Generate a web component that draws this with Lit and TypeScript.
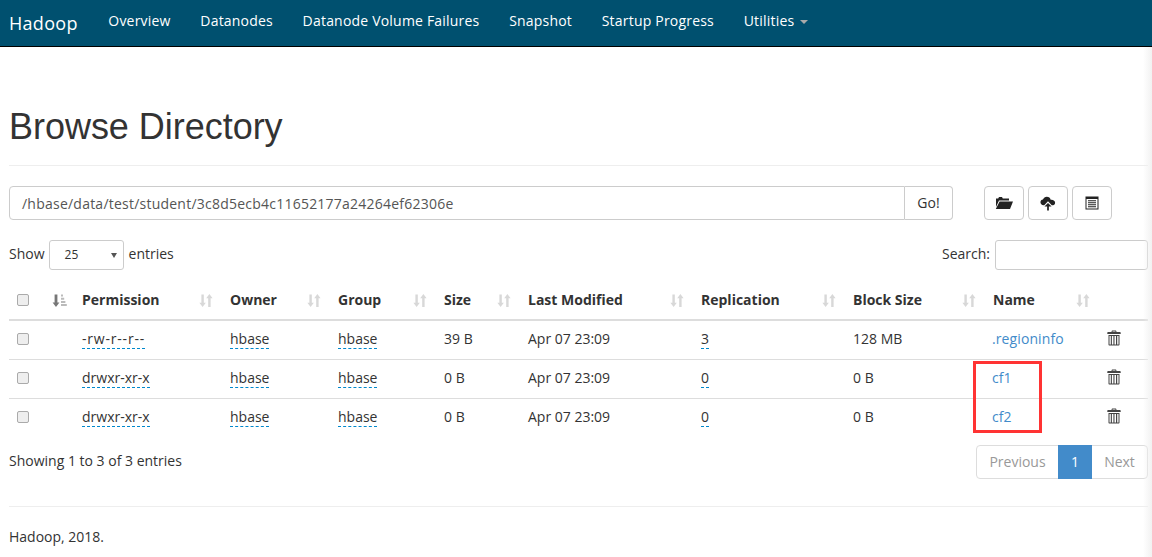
import { LitElement, html, css, svg } from "lit";
import { customElement } from "lit/decorators.js";
import { classMap } from "lit/directives/class-map.js";

const sortIcon = (active = false) => html`<svg class="sort" viewBox="0 0 16 14" width="16" height="15">
  ${active
    ? svg`<path d="M2.600 1h2.800v8h2L4 13.500.600 9h2z" fill="#777"/><path d="M9 1h2v2H9zM9 4.200h3.200v2H9zM9 7.400h4.400v2H9zM9 10.600h5.800v2H9z" fill="#bbb"/>`
    : svg`<path d="M3.400 1h2.400v8.200h2L4.600 13.500 1.400 9.200h2zM10.200 13.500h2.400V4.800h2L11.400.500 8.200 4.800h2z" fill="#d8d8d8"/>`}
</svg>`;

const trash = html`<svg class="ico" viewBox="0 0 14 16" width="14" height="16"><path fill="#444" fill-rule="evenodd" d="M5 .5h4l.6 1.500H13c.4 0 .7.300.7.700V4H.3V2.700c0-.4.300-.7.700-.7h3.400zM5.700 1.400 5.400 2h3.200l-.3-.6zM1.500 5h11v9.500c0 .6-.4 1-1 1h-9c-.6 0-1-.4-1-1zm1 1v8.500h1.300V6zm2.400 0v8.500h1.500V6zm2.600 0v8.500H9V6zm2.700 0v8.500h1.300V6z"/></svg>`;

const rows = [
  { p: "-rw-r--r--", s: "39 B", r: "3", b: "128 MB", n: ".regioninfo" },
  { p: "drwxr-xr-x", s: "0 B", r: "0", b: "0 B", n: "cf1" },
  { p: "drwxr-xr-x", s: "0 B", r: "0", b: "0 B", n: "cf2" },
];
const cols = ["Permission", "Owner", "Group", "Size", "Last Modified", "Replication", "Block Size", "Name"];
const navs = ["Overview", "Datanodes", "Datanode Volume Failures", "Snapshot", "Startup Progress"];

@customElement("app-root")
export class AppRoot extends LitElement {
  static styles = css`
    :host { display: block; position: relative; height: 557px; overflow: hidden; background: #fff; color: #333; font: 14px/20px "Open Sans", sans-serif; }
    nav { display: flex; align-items: center; box-sizing: content-box; background: #00506f; border-bottom: 1px solid #000; color: #fff; padding: 0 0 4px 9px; height: 42px; }
    .brand { font-size: 18px; width: 99.300px; letter-spacing: .3px; margin-top: 3px; }
    .nav-item { margin-right: 29.700px; letter-spacing: .2px; }
    .caret { display: inline-block; margin-left: 2px; vertical-align: middle; border-top: 4px solid #aaa; border-left: 4px solid transparent; border-right: 4px solid transparent; }
    main { padding: 0 4px 0 9px; }
    h1 { font: 500 36px/40px "Liberation Sans", sans-serif; letter-spacing: -.03px; margin: 0; padding: 60px 0 18px; border-bottom: 1px solid #eee; }
    .toolbar { display: flex; margin-top: 20px; height: 34px; }
    .path { width: 896px; box-sizing: border-box; border: 1px solid #ccc; border-radius: 4px 0 0 4px; padding: 7px 12px 5px; color: #555; letter-spacing: .23px; }
    .btn { box-sizing: border-box; border: 1px solid #ccc; border-radius: 4px; display: flex; align-items: center; justify-content: center; height: 34px; }
    .go { width: 48px; border-left: 0; border-radius: 0 4px 4px 0; }
    .tools { display: flex; gap: 4px; margin-left: 31px; }
    .tools .btn { width: 40px; }
    .filters { display: flex; align-items: center; margin-top: 20px; height: 30px; }
    .lbl { padding-bottom: 2px; }
    .sel { box-sizing: border-box; width: 75px; height: 30px; margin: 0 5px 0 4px; border: 1px solid #ccc; border-radius: 3px; display: flex; align-items: center; justify-content: space-between; padding: 0 6px 0 15px; font-size: 12px; }
    .sel i { border-top: 5px solid #555; border-left: 3px solid transparent; border-right: 3px solid transparent; }
    .grow { flex: 1; }
    .search { box-sizing: border-box; width: 153px; height: 30px; margin-left: 5px; border: 1px solid #ccc; border-radius: 3px; }
    table { border-collapse: collapse; table-layout: fixed; width: 1139px; margin-top: 11px; }
    th, td { padding: 0 8px; text-align: left; border-top: 1px solid #ddd; }
    td { padding-bottom: 2px; box-sizing: border-box; height: 39px; }
    th { border-top: 0; border-bottom: 2px solid #ddd; height: 39px; box-sizing: border-box; font-weight: 700; }
    .cell { display: flex; justify-content: space-between; align-items: center; }
    .sort { display: block; flex: none; }
    .cb { display: block; box-sizing: border-box; width: 12px; height: 12px; border: 1px solid #aaa; border-radius: 2px; background: #eee; }
    .ed { border-bottom: 1px dashed #08c; text-decoration: none; color: #333; }
    .wide { letter-spacing: .8px; }
    a.name { color: #428bca; letter-spacing: .1px; margin-left: -1px; }
    .ico { display: block; margin-top: -1px; }
    .foot { display: flex; align-items: center; justify-content: space-between; margin-top: 8px; }
    .pager { display: flex; height: 34px; border: 1px solid #ddd; border-radius: 4px; box-sizing: border-box; width: 172px; color: #999; }
    .pager span { display: flex; align-items: center; justify-content: center; }
    .pager .cur { background: #428bca; color: #fff; width: 34px; margin: -1px 0; }
    .pv { width: 81px; } .nx { flex: 1; }
    footer { margin-top: 27px; border-top: 1px solid #eee; padding-top: 20px; }
    .mark { position: absolute; left: 973px; top: 361px; width: 69px; height: 72px; box-sizing: border-box; border: 3px solid #f33; }
    .edge { position: absolute; right: 0; top: 47px; bottom: 0; width: 9px; background: linear-gradient(to right, rgba(240,240,240,0), rgba(240,240,240,.9)); }
  `;

  render() {
    return html`
      <nav>
        <span class="brand">Hadoop</span>
        ${navs.map((n) => html`<span class="nav-item">${n}</span>`)}
        <span class="nav-item">Utilities <span class="caret"></span></span>
      </nav>
      <main>
        <h1>Browse Directory</h1>
        <div class="toolbar">
          <div class="path">/hbase/data/test/student/3c8d5ecb4c11652177a24264ef62306e</div>
          <div class="btn go">Go!</div>
          <div class="tools">
            <div class="btn"><svg viewBox="0 0 18 14" width="18" height="14"><path fill="#222" d="M1 2.500h2.200l.8-1.500h3l.8 1.500H14v2H4L1 11zM4.600 5.500H18L15 13H.8z"/></svg></div>
            <div class="btn"><svg viewBox="0 0 18 16" width="16" height="15"><path fill="#222" d="M4 10C1.800 10 .5 8.300.5 6.600c0-1.600 1.200-3 2.800-3C4 1.800 5.800.5 7.600.5c2.300 0 4 1.500 4.400 3.300 2.800-.4 5 1.200 5 3.400 0 1.500-1 2.800-2.300 2.800h-1.500L9 5.500 4.800 10zM9 7.500l4 4h-3V16H8v-4.500H5z"/></svg></div>
            <div class="btn"><svg viewBox="0 0 14 14" width="14" height="14"><path fill="#222" fill-rule="evenodd" d="M.5.500h13v13H.5zM1.500 3v9.500h11V3zM3 4.200h8v1H3zM3 6.200h8v1H3zM3 8.200h8v1H3zM3 10.200h8v1H3z"/></svg></div>
          </div>
        </div>
        <div class="filters">
          <span class="lbl">Show</span>
          <div class="sel">25<i></i></div>
          <span class="lbl">entries</span>
          <span class="grow"></span>
          <span class="lbl">Search:</span>
          <div class="search"></div>
        </div>
        <table>
          <colgroup>
            ${[35, 30, 148, 108, 106, 84, 173, 152, 140, 114, 49].map((w) => html`<col style="width:${w}px" />`)}
          </colgroup>
          <thead>
            <tr>
              <th><span class="cb"></span></th>
              <th>${sortIcon(true)}</th>
              ${cols.map((c) => html`<th><div class="cell">${c}${sortIcon()}</div></th>`)}
              <th></th>
            </tr>
          </thead>
          <tbody>
            ${rows.map(
              (r) => html`<tr>
                <td><span class="cb"></span></td>
                <td></td>
                <td><a class="ed ${classMap({ wide: r.p.startsWith("-") })}">${r.p}</a></td>
                <td><a class="ed">hbase</a></td>
                <td><a class="ed">hbase</a></td>
                <td>${r.s}</td>
                <td>Apr 07 23:09</td>
                <td><a class="ed">${r.r}</a></td>
                <td>${r.b}</td>
                <td><a class="name">${r.n}</a></td>
                <td>${trash}</td>
              </tr>`
            )}
          </tbody>
        </table>
        <div class="foot">
          <span class="lbl">Showing 1 to 3 of 3 entries</span>
          <div class="pager"><span class="pv">Previous</span><span class="cur">1</span><span class="nx">Next</span></div>
        </div>
        <footer>Hadoop, 2018.</footer>
      </main>
      <div class="mark"></div>
      <div class="edge"></div>
    `;
  }
}
